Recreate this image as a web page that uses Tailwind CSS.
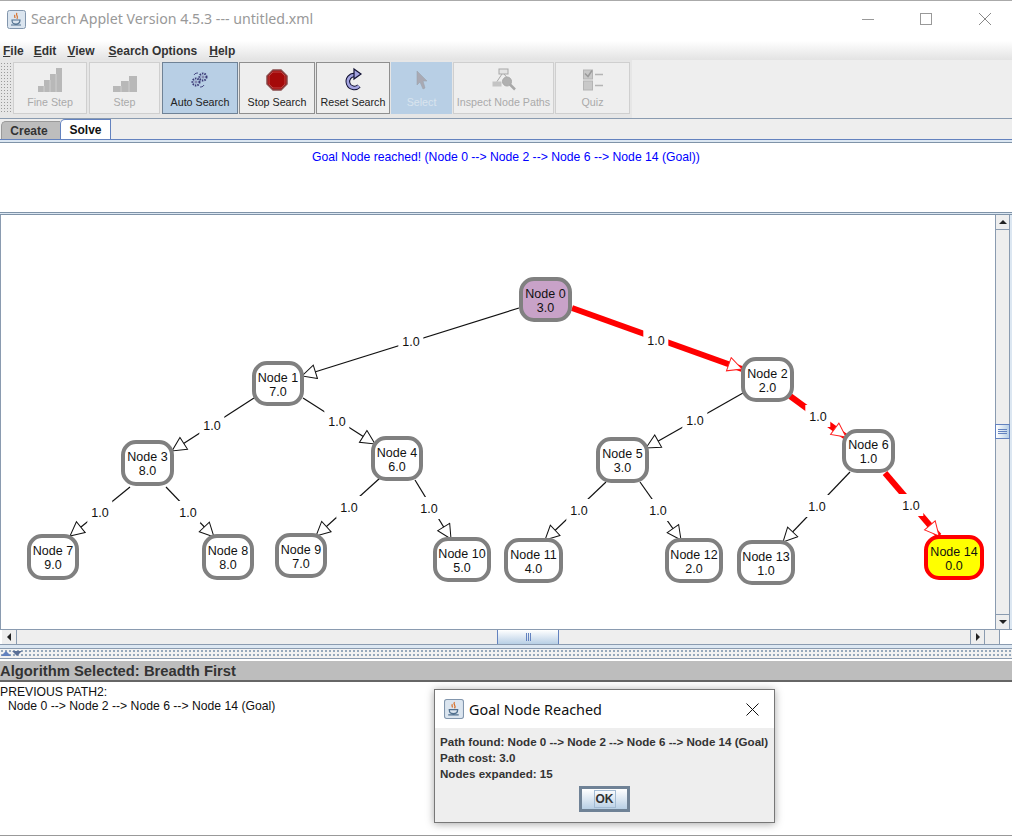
<!DOCTYPE html>
<html lang="en">
<head>
    <meta charset="UTF-8">
    <meta name="viewport" content="width=device-width, initial-scale=1.0">
    <title>Search Applet</title>
    <script src="https://cdn.jsdelivr.net/npm/@tailwindcss/browser@4"></script>
</head>
<body class="bg-white font-['Liberation_Sans',Arial,sans-serif] overflow-hidden">
<div class="relative w-[1012px] h-[837px] overflow-hidden flex flex-col bg-white">

    <!-- Title bar -->
    <div class="h-[41px] shrink-0 border-t border-[#aaaaaa] flex items-center pl-[7px] pb-[4px]">
        <svg width="19" height="19" viewBox="0 0 19 19"><rect x="0.5" y="0.5" width="18" height="18" rx="2" fill="#dbe5ef" stroke="#8296ad"/><path d="M10 3c-2 2 2 3 0 6M8 5c-1 1 0 2 0 3" fill="none" stroke="#d8702a" stroke-width="1.2"/><path d="M5 10h8c0 3-1 4-4 4s-4-1-4-4zM4 15h10" fill="none" stroke="#51708f" stroke-width="1.2"/></svg>
        <span class="ml-[5px] font-['Noto_Sans',sans-serif] text-[14.2px] text-[#999999]">Search Applet Version 4.5.3 --- untitled.xml</span>
        <div class="ml-auto flex items-center">
            <div class="w-[12px] h-px bg-[#999999] mr-[46px]"></div>
            <div class="w-[12px] h-[12px] border border-[#999999] mr-[47px]"></div>
            <svg class="mr-[21px]" width="12" height="12" viewBox="0 0 12 12"><path d="M0 0L12 12M12 0L0 12" stroke="#888888" stroke-width="1"/></svg>
        </div>
    </div>

    <!-- Menu bar -->
    <div class="h-[19px] shrink-0 bg-linear-to-b from-white to-[#e3e3e3] flex items-center text-[12px] font-bold text-[#333333]">
        <span class="ml-[3px]"><u>F</u>ile</span>
        <span class="ml-[10px]"><u>E</u>dit</span>
        <span class="ml-[11px]"><u>V</u>iew</span>
        <span class="ml-[14px]"><u>S</u>earch Options</span>
        <span class="ml-[12px]"><u>H</u>elp</span>
    </div>

    <!-- Toolbar -->
    <div class="h-[59px] shrink-0 bg-[#eeeeee] border-b border-[#8a9bb0]">
        <div class="w-[632px] h-[58px] bg-[#e6e6e6] flex items-center text-[10.7px] leading-[14px] pb-[2px]">
            <div class="w-[12px] h-[52px] mr-px bg-[radial-gradient(#9a9a9a_1px,transparent_1px)] bg-[length:3px_3px]"></div>
            <div class="w-[74px] h-[52px] mr-[2px] bg-[#eeeeee] border border-[#cfcfcf] flex flex-col items-center text-[#aaaaaa]">
                <svg class="mt-[4px] h-[26px]" width="24" height="24" viewBox="0 0 24 24" fill="#b8b8b8"><path d="M0 24V18H6V12H12V6H18V0H24V24Z"/><path d="M6 18V24M12 12V24M18 6V24" stroke="#cfcfcf"/></svg>
                <span class="mt-[2px]">Fine Step</span>
            </div>
            <div class="w-[71px] h-[52px] mr-[2px] bg-[#eeeeee] border border-[#cfcfcf] flex flex-col items-center text-[#aaaaaa]">
                <svg class="mt-[4px] h-[26px]" width="24" height="24" viewBox="0 0 24 24" fill="#b8b8b8"><path d="M0 24V18H8V13H16V8H24V24Z"/><path d="M8 18V24M16 13V24" stroke="#cfcfcf"/></svg>
                <span class="mt-[2px]">Step</span>
            </div>
            <div class="w-[76px] h-[52px] mr-px bg-[#b8cfe5] border border-[#6f8296] flex flex-col items-center text-[#222222]">
                <svg class="mt-[4px] h-[26px]" width="18" height="18" viewBox="0 0 18 18" fill="none" stroke="#3c3c78"><circle cx="12" cy="6" r="3.5" stroke-width="2" stroke-dasharray="1.5 1"/><circle cx="12" cy="6" r="1" fill="#ffffff" stroke-width="0.7"/><circle cx="5" cy="11" r="3.5" stroke-width="2" stroke-dasharray="1.5 1"/><circle cx="5" cy="11" r="1" fill="#ffffff" stroke-width="0.7"/><path d="M3 4c1-2 3-2 4-2M13 14c-1 2-3 2-4 2" stroke-width="0.9"/></svg>
                <span class="mt-[2px]">Auto Search</span>
            </div>
            <div class="w-[76px] h-[52px] mr-px bg-[#eeeeee] border border-[#8f8f8f] flex flex-col items-center text-[#222222]">
                <svg class="mt-[4px] h-[26px]" width="22" height="22" viewBox="0 0 22 22"><polygon points="7,1 15,1 21,7 21,15 15,21 7,21 1,15 1,7" fill="#a00000" stroke="#8a4a4a" stroke-width="1.5"/><polygon points="7,3 15,3 19,7 19,15 15,19 7,19 3,15 3,7" fill="#a50a0a" stroke="#c86060" stroke-width="0.7"/></svg>
                <span class="mt-[2px]">Stop Search</span>
            </div>
            <div class="w-[74px] h-[52px] mr-px bg-[#eeeeee] border border-[#8f8f8f] flex flex-col items-center text-[#222222]">
                <svg class="mt-[4px] h-[26px]" width="22" height="24" viewBox="0 0 22 24"><path d="M13 7A6.5 6.5 0 1 0 17 18" fill="none" stroke="#111133" stroke-width="4.6"/><path d="M13 7A6.5 6.5 0 1 0 17 18" fill="none" stroke="#a3a3e0" stroke-width="2.6"/><polygon points="12,1 19,6 12,11" fill="#a3a3e0" stroke="#111133" stroke-width="1.2"/></svg>
                <span class="mt-[2px]">Reset Search</span>
            </div>
            <div class="w-[61px] h-[52px] mr-px bg-[#b8cfe5] flex flex-col items-center text-[#d9e4ee]">
                <svg class="mt-[5px] h-[26px]" width="11" height="20" viewBox="0 0 11 20"><path d="M1 1V15L4 12L7 19L9 18L7 11H11Z" fill="#a9a9b3" stroke="#9aa4ae" stroke-width="0.6"/></svg>
                <span class="mt-[2px]">Select</span>
            </div>
            <div class="w-[101px] h-[52px] mr-px bg-[#eeeeee] border border-[#cfcfcf] flex flex-col items-center text-[#aaaaaa]">
                <svg class="mt-[4px] h-[26px]" width="24" height="23" viewBox="0 0 24 23" fill="#c4c4c4" stroke="#a8a8a8"><rect x="7" y="0.5" width="9" height="5" fill="#e4e4e4"/><rect x="0.5" y="13" width="9" height="5" stroke="none"/><path d="M10 5.5L5 13M12 5.500L15 9" fill="none"/><circle cx="15" cy="13" r="4.500" fill="#b0b0b0"/><path d="M18 16L23 21" stroke-width="2.500" fill="none"/></svg>
                <span class="mt-[2px]">Inspect Node Paths</span>
            </div>
            <div class="w-[75px] h-[52px] bg-[#eeeeee] border border-[#cfcfcf] flex flex-col items-center text-[#aaaaaa]">
                <svg class="mt-[4px] h-[26px]" width="20" height="21" viewBox="0 0 20 21" fill="#c8c8c8" stroke="#b4b4b4"><rect x="0.5" y="0.5" width="9" height="9"/><path d="M2 4L5 7L9 1" fill="none" stroke="#9a9a9a" stroke-width="1.500"/><rect x="0.500" y="11.500" width="9" height="9"/><path d="M12 5H20M12 16H20" stroke-width="1.500" fill="none"/></svg>
                <span class="mt-[2px]">Quiz</span>
            </div>
        </div>
    </div>

    <!-- Tabs -->
    <div class="h-[21px] shrink-0 bg-[#eeeeee] flex items-end pl-px border-b border-[#6382bf] text-[12px] font-bold text-[#333333]">
        <div class="w-[59px] h-[18px] pr-[4px] bg-[#bdbdbd] border-t border-l border-[#9a9a9a] rounded-tl-[5px] flex items-center justify-center">Create</div>
        <div class="w-[51px] h-[20px] bg-white border-t border-x border-[#6382bf] rounded-tl-[5px] flex items-center justify-center text-[#111111]">Solve</div>
    </div>
    <div class="h-[3px] shrink-0 bg-[#dce7f2] border-b border-[#7f93a8]"></div>

    <!-- Message panel -->
    <div class="h-[69px] shrink-0 bg-white text-center text-[12.2px] leading-[14px] pt-[7px] text-[#0000ff]">Goal Node reached! (Node 0 --&gt; Node 2 --&gt; Node 6 --&gt; Node 14 (Goal))</div>
    <div class="h-[3px] shrink-0 bg-[#dce7f2] border-y border-[#7f93a8]"></div>

    <!-- Graph canvas with scrollbars -->
    <div class="h-[414px] shrink-0 flex">
        <div class="relative w-[995px] bg-white shadow-[inset_1px_0_0_#8a9bb0] text-[12.5px] leading-[14px] text-[#111111]">
            <svg class="absolute inset-0" width="995" height="414" viewBox="0 0 995 414" fill="none">
                <defs>
                    <marker id="arrowBlack" markerUnits="userSpaceOnUse" markerWidth="17" markerHeight="17" refX="15" refY="8" orient="auto"><polygon points="1,1 15,8 1,15" fill="white" stroke="#111111"/></marker>
                    <marker id="arrowRed" markerUnits="userSpaceOnUse" markerWidth="17" markerHeight="17" refX="15" refY="8" orient="auto"><polygon points="1,1 15,8 1,15" fill="white" stroke="#ff2020"/></marker>
                </defs>
                <g stroke="#111111" stroke-width="1.200">
                    <line x1="519" y1="93" x2="302" y2="161" marker-end="url(#arrowBlack)"/>
                    <line x1="254" y1="183" x2="172" y2="236" marker-end="url(#arrowBlack)"/>
                    <line x1="303" y1="183" x2="375" y2="229" marker-end="url(#arrowBlack)"/>
                    <line x1="743" y1="178" x2="646" y2="233" marker-end="url(#arrowBlack)"/>
                    <line x1="130" y1="272" x2="70" y2="321" marker-end="url(#arrowBlack)"/>
                    <line x1="166" y1="272" x2="214" y2="322" marker-end="url(#arrowBlack)"/>
                    <line x1="380" y1="263" x2="316" y2="321" marker-end="url(#arrowBlack)"/>
                    <line x1="415" y1="265" x2="451" y2="324" marker-end="url(#arrowBlack)"/>
                    <line x1="606" y1="267" x2="545" y2="325" marker-end="url(#arrowBlack)"/>
                    <line x1="640" y1="267" x2="681" y2="325" marker-end="url(#arrowBlack)"/>
                    <line x1="850" y1="257" x2="783" y2="327" marker-end="url(#arrowBlack)"/>
                </g>
                <g stroke="#ff0000" stroke-width="6">
                    <line x1="572" y1="93" x2="742" y2="154" marker-end="url(#arrowRed)"/>
                    <line x1="790" y1="181" x2="846" y2="222" marker-end="url(#arrowRed)"/>
                    <line x1="885" y1="258" x2="939" y2="321" marker-end="url(#arrowRed)"/>
                </g>
            </svg>

            <!-- Edge labels -->
            <span class="absolute -translate-x-1/2 -translate-y-1/2 bg-white px-[4px] pt-[5px] pb-[3px] left-[411px] top-[126px]">1.0</span>
            <span class="absolute -translate-x-1/2 -translate-y-1/2 bg-white px-[4px] pt-[5px] pb-[3px] left-[656px] top-[125px]">1.0</span>
            <span class="absolute -translate-x-1/2 -translate-y-1/2 bg-white px-[4px] pt-[5px] pb-[3px] left-[212px] top-[210px]">1.0</span>
            <span class="absolute -translate-x-1/2 -translate-y-1/2 bg-white px-[4px] pt-[5px] pb-[3px] left-[337px] top-[206px]">1.0</span>
            <span class="absolute -translate-x-1/2 -translate-y-1/2 bg-white px-[4px] pt-[5px] pb-[3px] left-[695px] top-[205px]">1.0</span>
            <span class="absolute -translate-x-1/2 -translate-y-1/2 bg-white px-[4px] pt-[5px] pb-[3px] left-[818px] top-[201px]">1.0</span>
            <span class="absolute -translate-x-1/2 -translate-y-1/2 bg-white px-[4px] pt-[5px] pb-[3px] left-[100px] top-[297px]">1.0</span>
            <span class="absolute -translate-x-1/2 -translate-y-1/2 bg-white px-[4px] pt-[5px] pb-[3px] left-[188px] top-[297px]">1.0</span>
            <span class="absolute -translate-x-1/2 -translate-y-1/2 bg-white px-[4px] pt-[5px] pb-[3px] left-[349px] top-[292px]">1.0</span>
            <span class="absolute -translate-x-1/2 -translate-y-1/2 bg-white px-[4px] pt-[5px] pb-[3px] left-[429px] top-[293px]">1.0</span>
            <span class="absolute -translate-x-1/2 -translate-y-1/2 bg-white px-[4px] pt-[5px] pb-[3px] left-[579px] top-[295px]">1.0</span>
            <span class="absolute -translate-x-1/2 -translate-y-1/2 bg-white px-[4px] pt-[5px] pb-[3px] left-[658px] top-[295px]">1.0</span>
            <span class="absolute -translate-x-1/2 -translate-y-1/2 bg-white px-[4px] pt-[5px] pb-[3px] left-[817px] top-[291px]">1.0</span>
            <span class="absolute -translate-x-1/2 -translate-y-1/2 bg-white px-[4px] pt-[5px] pb-[3px] left-[911px] top-[290px]">1.0</span>

            <!-- Nodes -->
            <div class="absolute left-[519px] top-[62px] w-[53px] h-[45px] pt-[2px] bg-[#c8a2c8] border-4 border-[#808080] rounded-[15px] flex flex-col items-center justify-center"><span>Node 0</span><span>3.0</span></div>
            <div class="absolute left-[252px] top-[146px] w-[52px] h-[45px] pt-[2px] bg-white border-4 border-[#808080] rounded-[15px] flex flex-col items-center justify-center"><span>Node 1</span><span>7.0</span></div>
            <div class="absolute left-[741px] top-[142px] w-[53px] h-[45px] pt-[2px] bg-white border-4 border-[#808080] rounded-[15px] flex flex-col items-center justify-center"><span>Node 2</span><span>2.0</span></div>
            <div class="absolute left-[121px] top-[225px] w-[53px] h-[46px] pt-[2px] bg-white border-4 border-[#808080] rounded-[15px] flex flex-col items-center justify-center"><span>Node 3</span><span>8.0</span></div>
            <div class="absolute left-[371px] top-[221px] w-[52px] h-[45px] pt-[2px] bg-white border-4 border-[#808080] rounded-[15px] flex flex-col items-center justify-center"><span>Node 4</span><span>6.0</span></div>
            <div class="absolute left-[596px] top-[222px] w-[53px] h-[46px] pt-[2px] bg-white border-4 border-[#808080] rounded-[15px] flex flex-col items-center justify-center"><span>Node 5</span><span>3.0</span></div>
            <div class="absolute left-[842px] top-[214px] w-[53px] h-[44px] pt-[2px] bg-white border-4 border-[#808080] rounded-[15px] flex flex-col items-center justify-center"><span>Node 6</span><span>1.0</span></div>
            <div class="absolute left-[27px] top-[319px] w-[52px] h-[46px] pt-[2px] bg-white border-4 border-[#808080] rounded-[15px] flex flex-col items-center justify-center"><span>Node 7</span><span>9.0</span></div>
            <div class="absolute left-[202px] top-[319px] w-[52px] h-[46px] pt-[2px] bg-white border-4 border-[#808080] rounded-[15px] flex flex-col items-center justify-center"><span>Node 8</span><span>8.0</span></div>
            <div class="absolute left-[275px] top-[318px] w-[52px] h-[45px] pt-[2px] bg-white border-4 border-[#808080] rounded-[15px] flex flex-col items-center justify-center"><span>Node 9</span><span>7.0</span></div>
            <div class="absolute left-[433px] top-[322px] w-[58px] h-[45px] pt-[2px] bg-white border-4 border-[#808080] rounded-[15px] flex flex-col items-center justify-center"><span>Node 10</span><span>5.0</span></div>
            <div class="absolute left-[504px] top-[323px] w-[59px] h-[45px] pt-[2px] bg-white border-4 border-[#808080] rounded-[15px] flex flex-col items-center justify-center"><span>Node 11</span><span>4.0</span></div>
            <div class="absolute left-[665px] top-[323px] w-[58px] h-[45px] pt-[2px] bg-white border-4 border-[#808080] rounded-[15px] flex flex-col items-center justify-center"><span>Node 12</span><span>2.0</span></div>
            <div class="absolute left-[737px] top-[325px] w-[58px] h-[45px] pt-[2px] bg-white border-4 border-[#808080] rounded-[15px] flex flex-col items-center justify-center"><span>Node 13</span><span>1.0</span></div>
            <div class="absolute left-[924px] top-[320px] w-[60px] h-[45px] pt-[2px] bg-[#ffff00] border-4 border-[#ff0000] rounded-[15px] flex flex-col items-center justify-center"><span>Node 14</span><span>0.0</span></div>
        </div>

        <!-- Vertical scrollbar -->
        <div class="w-[15px] bg-[#eeeeee] border-x border-[#8a9bb0] flex flex-col">
            <div class="h-[15px] flex items-center justify-center border-b border-[#8a9bb0]"><div class="w-0 h-0 border-x-[4px] border-x-transparent border-b-[4px] border-b-[#222222]"></div></div>
            <div class="flex-1 relative">
                <div class="absolute -left-px -right-px top-[194px] h-[15px] bg-linear-to-r from-white to-[#b8cfe5] border border-[#6382bf] flex flex-col items-center justify-center gap-px">
                    <div class="w-[9px] h-px bg-[#6382bf]"></div><div class="w-[9px] h-px bg-[#6382bf]"></div><div class="w-[9px] h-px bg-[#6382bf]"></div>
                </div>
            </div>
            <div class="h-[15px] flex items-center justify-center border-t border-[#8a9bb0]"><div class="w-0 h-0 border-x-[4px] border-x-transparent border-t-[4px] border-t-[#222222]"></div></div>
        </div>
        <div class="w-[2px] bg-[#dce7f2]"></div>
    </div>

    <!-- Horizontal scrollbar -->
    <div class="h-[16px] shrink-0 border-y border-[#8a9bb0] flex pl-[2px]">
        <div class="w-[15px] bg-[#eeeeee] border-r border-[#8a9bb0] flex items-center justify-center"><div class="w-0 h-0 border-y-[4px] border-y-transparent border-r-[4px] border-r-[#222222]"></div></div>
        <div class="relative w-[953px] bg-[#eeeeee]">
            <div class="absolute left-[480px] top-0 bottom-0 w-[62px] bg-linear-to-b from-white to-[#b8cfe5] border-x border-[#6382bf] flex items-center justify-center gap-px">
                <div class="w-px h-[8px] bg-[#6382bf]"></div><div class="w-px h-[8px] bg-[#6382bf]"></div><div class="w-px h-[8px] bg-[#6382bf]"></div>
            </div>
        </div>
        <div class="w-[15px] bg-[#eeeeee] border-x border-[#8a9bb0] flex items-center justify-center"><div class="w-0 h-0 border-y-[4px] border-y-transparent border-l-[4px] border-l-[#222222]"></div></div>
        <div class="w-[15px] bg-[#eeeeee] border-r border-[#8a9bb0]"></div>
    </div>
    <div class="h-[4px] shrink-0 bg-[#dce7f2] border-b border-[#8a9bb0]"></div>

    <!-- Split pane divider -->
    <div class="h-[10px] shrink-0 border-b border-[#8a9bb0] bg-[#f2f2f2] bg-[radial-gradient(#8fa3b8_0.7px,transparent_0.8px)] bg-[length:4px_4px] flex items-center pl-[1px] gap-[1px]">
        <div class="w-0 h-0 border-x-[5px] border-x-transparent border-b-[5px] border-b-[#6382bf]"></div>
        <div class="w-0 h-0 border-x-[5px] border-x-transparent border-t-[5px] border-t-[#5a6f96]"></div>
    </div>

    <!-- Algorithm header -->
    <div class="h-[21px] shrink-0 mt-[2px] bg-[#bdbdbd] border-b-2 border-[#666666] text-[14.8px] leading-[20px] font-bold text-[#333333]">Algorithm Selected: Breadth First</div>

    <!-- Path output -->
    <div class="flex-1 text-[12.2px] leading-[14px] text-[#111111] pt-[3px] border-b border-[#999999] mb-px">
        <div>PREVIOUS PATH2:</div>
        <div class="pl-[8px]">Node 0 --&gt; Node 2 --&gt; Node 6 --&gt; Node 14 (Goal)</div>
    </div>

    <!-- Goal dialog -->
    <div class="absolute left-[434px] top-[689px] w-[341px] h-[134px] bg-[#eeeeee] border border-[#777777] shadow-[0_1px_8px_rgba(0,0,0,0.35)] flex flex-col">
        <div class="h-[38px] shrink-0 bg-white flex items-center pl-[9px] pr-[15px]">
            <svg width="20" height="20" viewBox="0 0 19 19"><rect x="0.5" y="0.5" width="18" height="18" rx="2" fill="#dbe5ef" stroke="#8296ad"/><path d="M10 3c-2 2 2 3 0 6M8 5c-1 1 0 2 0 3" fill="none" stroke="#d8702a" stroke-width="1.2"/><path d="M5 10h8c0 3-1 4-4 4s-4-1-4-4zM4 15h10" fill="none" stroke="#51708f" stroke-width="1.2"/></svg>
            <span class="ml-[5px] pt-[2px] font-['Noto_Sans',sans-serif] text-[14.4px] text-[#111111]">Goal Node Reached</span>
            <svg class="ml-auto" width="13" height="13" viewBox="0 0 13 13"><path d="M0.500 0.500L12.500 12.500M12.500 0.500L0.500 12.500" stroke="#111111" stroke-width="1"/></svg>
        </div>
        <div class="pl-[5px] pt-[6px] text-[11.6px] leading-[16px] font-bold text-[#333333] whitespace-nowrap">
            <div>Path found: Node 0 --&gt; Node 2 --&gt; Node 6 --&gt; Node 14 (Goal)</div>
            <div>Path cost: 3.0</div>
            <div>Nodes expanded: 15</div>
        </div>
        <div class="flex justify-center mt-[4px]">
            <div class="w-[51px] h-[26px] border-[3px] border-[#6f8296] bg-linear-to-b from-white to-[#b8cfe5] flex items-center justify-center">
                <span class="border border-[#a3bbd3] px-px leading-[16px] text-[12px] font-bold text-[#333333]">OK</span>
            </div>
        </div>
    </div>
</div>
</body>
</html>
